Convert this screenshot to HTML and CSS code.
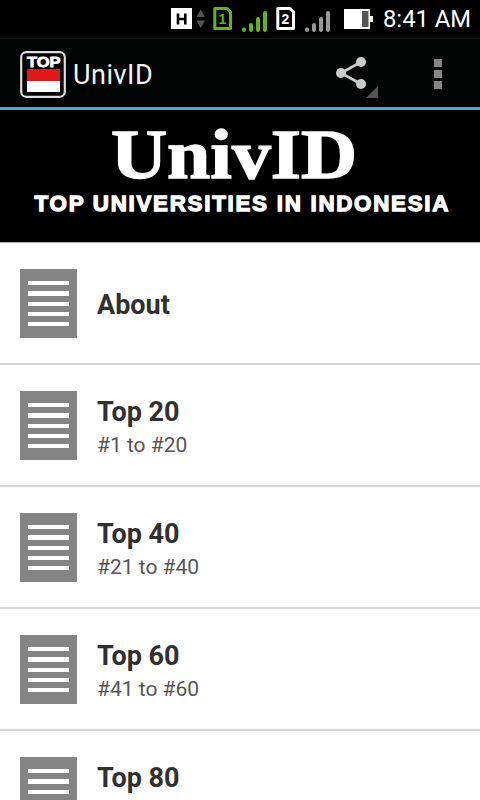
FILE: index.html
```html
<!DOCTYPE html>
<html lang="en">
<head>
  <meta charset="UTF-8">
  <title>UnivID</title>
  <link rel="stylesheet" href="styles.css">
</head>
<body>
  <div class="status-bar">
    <svg class="status-icons" width="205" height="38" viewBox="0 0 205 38">
      <!-- H badge and data arrows -->
      <rect x="1" y="8" width="21" height="21" fill="#fff"/>
      <path d="M8 13.500V24.500M15.300 13.500V24.500M8 19H15.300" stroke="#000" stroke-width="2.600" fill="none"/>
      <path d="M26.500 17L30.700 9.500L35 17ZM26.500 20.500H35L30.700 28Z" fill="#555"/>
      <!-- SIM 1 -->
      <path d="M44.800 8.500H57L60.500 12V28.500H44.800Z" fill="#000" stroke="#62b516" stroke-width="3" stroke-linejoin="round"/>
      <text class="sim" x="52.500" y="24" fill="#62b516">1</text>
      <path d="M74 30V29.500M81 30V25M88 30V19M95 30V13" stroke="#62b516" stroke-width="4" stroke-linecap="round"/>
      <!-- SIM 2 -->
      <path d="M107.800 8.500H120L123.500 12V28.500H107.800Z" fill="#000" stroke="#fff" stroke-width="3" stroke-linejoin="round"/>
      <text class="sim" x="115.500" y="24" fill="#fff">2</text>
      <path d="M137 30V29.500M144 30V25M151 30V19M158 30V13" stroke="#999" stroke-width="4" stroke-linecap="round"/>
      <!-- battery -->
      <path d="M174 9H200V16H203V22H200V29H174Z" fill="#fff"/>
      <rect x="192" y="11" width="6.500" height="16" fill="#555"/>
    </svg>
    <span class="clock">8:41 AM</span>
  </div>

  <header class="action-bar">
    <svg class="app-icon" width="46" height="47" viewBox="0 0 46 47">
      <rect x="1.200" y="1.200" width="43.600" height="44.600" rx="5" fill="#000" stroke="#ddd" stroke-width="2.200"/>
      <text x="7" y="16" textLength="33.500" lengthAdjust="spacingAndGlyphs">TOP</text>
      <rect x="7" y="18" width="33" height="12" fill="#e0191d"/>
      <rect x="7" y="30" width="33" height="11" fill="#fff"/>
    </svg>
    <h1>UnivID</h1>
    <svg class="share" width="44" height="48" viewBox="0 0 44 48">
      <path d="M26 12L6 23L26 34" fill="none" stroke="#ccc" stroke-width="2.600"/>
      <circle cx="26" cy="12" r="5" fill="#ccc"/>
      <circle cx="6" cy="23" r="5" fill="#ccc"/>
      <circle cx="26" cy="34" r="5" fill="#ccc"/>
      <path d="M43 36V48H31Z" fill="#555"/>
    </svg>
    <div class="overflow"><i></i><i></i><i></i></div>
  </header>

  <svg class="banner" width="480" height="133" viewBox="0 0 480 133">
    <text class="brand" x="110" y="69" textLength="248" lengthAdjust="spacingAndGlyphs">UnivID</text>
    <text class="tagline" x="33" y="102" textLength="417">TOP UNIVERSITIES IN INDONESIA</text>
  </svg>

  <ul class="list">
    <li>
      <div class="doc"></div>
      <div class="label"><h2>About</h2></div>
    </li>
    <li>
      <div class="doc"></div>
      <div class="label"><h2>Top 20</h2><p>#1 to #20</p></div>
    </li>
    <li>
      <div class="doc"></div>
      <div class="label"><h2>Top 40</h2><p>#21 to #40</p></div>
    </li>
    <li>
      <div class="doc"></div>
      <div class="label"><h2>Top 60</h2><p>#41 to #60</p></div>
    </li>
    <li class="partial">
      <div class="doc"></div>
      <div class="label"><h2>Top 80</h2></div>
    </li>
  </ul>
</body>
</html>
```

FILE: styles.css
```css
* {
  box-sizing: border-box;
}
body {
  margin: 0;
  height: 800px;
  overflow: hidden;
  background-color: #fff;
  font-family: Roboto, sans-serif;
}
svg {
  display: block;
  flex: none;
}
.status-bar {
  display: flex;
  height: 38px;
  padding-left: 170px;
  background-color: #000;
}
.sim {
  font: bold 14px "Liberation Sans", sans-serif;
  text-anchor: middle;
}
.clock {
  margin-left: 8px;
  color: #fff;
  font-size: 23.8px;
  line-height: 38px;
  white-space: nowrap;
}
.action-bar {
  display: flex;
  height: 72px;
  padding-left: 20px;
  background-color: #020404;
  border-top: 1px solid #151717;
  border-bottom: 3px solid #50a8d0;
}
.app-icon {
  margin-top: 12px;
}
.app-icon text {
  font: bold 15px "Liberation Sans", sans-serif;
  fill: #fff;
  stroke: #fff;
  stroke-width: 0.8px;
}
.action-bar h1 {
  width: 261px;
  margin: 0;
  padding-left: 7px;
  color: #f3f3f3;
  font-size: 27px;
  font-weight: 400;
  letter-spacing: 0.5px;
  line-height: 73px;
}
.share {
  margin: 11px 0 0 8px;
}
.overflow {
  display: flex;
  flex-direction: column;
  gap: 3px;
  margin: 20px 0 0 55px;
}
.overflow i {
  width: 8px;
  height: 8px;
  background-color: #858585;
}
.banner {
  background-color: #000;
  border-bottom: 1px solid #aaa;
}
.banner text {
  fill: #fff;
  stroke: #fff;
}
.banner .brand {
  font: bold 70px "Liberation Serif", serif;
  stroke-width: 1.4px;
}
.banner .tagline {
  font: bold 22.5px "Liberation Sans", sans-serif;
  stroke-width: 1.3px;
}
.list {
  margin: 0;
  padding: 0;
  list-style: none;
}
.list li {
  display: flex;
  align-items: center;
  gap: 20px;
  height: 122px;
  padding-left: 20px;
  border-bottom: 2px solid #d3d3d3;
}
/* row cut by the bottom of the screen */
.list .partial {
  align-items: flex-start;
  height: 69px;
  padding-top: 26px;
  border-bottom: 0;
  overflow: hidden;
}
.doc {
  width: 57px;
  height: 69px;
  padding: 12px 8px;
  background: repeating-linear-gradient(#fff 0, #fff 4.3px, #848484 4.3px, #848484 10.25px) content-box, #848484;
}
.label {
  padding-top: 3px;
}
.label h2 {
  margin: 0;
  color: #303030;
  font-size: 27px;
  line-height: 36px;
}
.label p {
  margin: 0;
  color: #555;
  font-size: 21px;
  line-height: 30px;
}
```
